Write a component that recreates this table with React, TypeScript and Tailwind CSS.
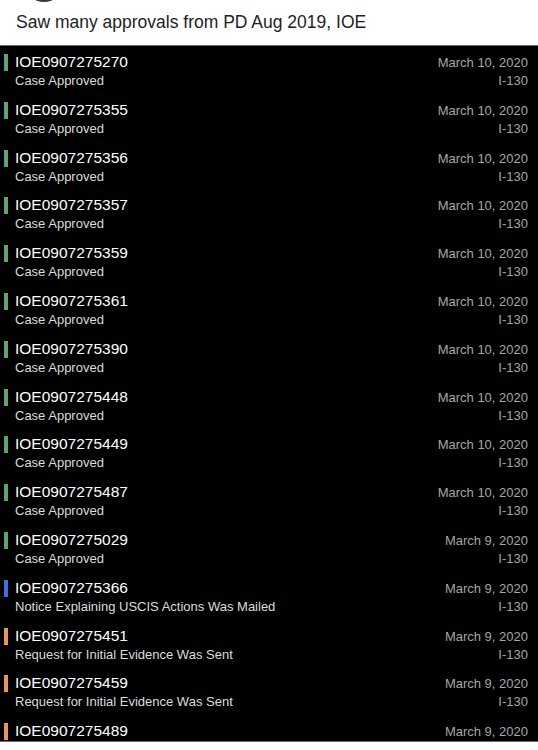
import React from "react";

type Row = { id: string; status?: string; date: string; form?: string; color: "green" | "blue" | "orange" };

const rows: Row[] = [
  { id: "IOE0907275270", status: "Case Approved", date: "March 10, 2020", form: "I-130", color: "green" },
  { id: "IOE0907275355", status: "Case Approved", date: "March 10, 2020", form: "I-130", color: "green" },
  { id: "IOE0907275356", status: "Case Approved", date: "March 10, 2020", form: "I-130", color: "green" },
  { id: "IOE0907275357", status: "Case Approved", date: "March 10, 2020", form: "I-130", color: "green" },
  { id: "IOE0907275359", status: "Case Approved", date: "March 10, 2020", form: "I-130", color: "green" },
  { id: "IOE0907275361", status: "Case Approved", date: "March 10, 2020", form: "I-130", color: "green" },
  { id: "IOE0907275390", status: "Case Approved", date: "March 10, 2020", form: "I-130", color: "green" },
  { id: "IOE0907275448", status: "Case Approved", date: "March 10, 2020", form: "I-130", color: "green" },
  { id: "IOE0907275449", status: "Case Approved", date: "March 10, 2020", form: "I-130", color: "green" },
  { id: "IOE0907275487", status: "Case Approved", date: "March 10, 2020", form: "I-130", color: "green" },
  { id: "IOE0907275029", status: "Case Approved", date: "March 9, 2020", form: "I-130", color: "green" },
  { id: "IOE0907275366", status: "Notice Explaining USCIS Actions Was Mailed", date: "March 9, 2020", form: "I-130", color: "blue" },
  { id: "IOE0907275451", status: "Request for Initial Evidence Was Sent", date: "March 9, 2020", form: "I-130", color: "orange" },
  { id: "IOE0907275459", status: "Request for Initial Evidence Was Sent", date: "March 9, 2020", form: "I-130", color: "orange" },
  { id: "IOE0907275489", date: "March 9, 2020", color: "orange" },
];

function Bar({ color }: { color: Row["color"] }) {
  const cls =
    color === "green" ? "bg-[#5fa274]" : color === "blue" ? "bg-[#3a72dc]" : "bg-[#e8955a]";
  return <div className={`mt-[1px] h-[17px] w-[4px] shrink-0 ${cls}`} />;
}

export default function App() {
  return (
    <div
      className="relative h-[750px] w-[538px] overflow-hidden bg-white"
      style={{ fontFamily: '"Liberation Sans", Arial, sans-serif' }}
    >
      <div className="absolute left-[24px] top-[-38px] h-[40px] w-[40px] rounded-full bg-[#3a3a3a]" />
      <div className="h-[45px] pl-[16px] pt-[11px] text-[17.5px] leading-[22px] text-[#222]">
        Saw many approvals from PD Aug 2019, IOE
      </div>
      <div className="h-[697px] overflow-hidden border-y border-[#6a6a6a] bg-black">
        {rows.map((r) => (
          <div key={r.id} className="flex h-[47.8px] items-start pl-[4px] pr-[10px] pt-[7px]">
            <Bar color={r.color} />
            <div className="ml-[7px] flex min-w-0 flex-1 flex-col">
              <div className="text-[15.5px] leading-[18px] text-white">{r.id}</div>
              {r.status && (
                <div className="text-[13px] leading-[20px] text-[#dcdcdc]">{r.status}</div>
              )}
            </div>
            <div className="flex flex-col items-end pt-[1px]">
              <div className="text-[13px] leading-[18px] text-[#a6a6a6]">{r.date}</div>
              {r.form && <div className="text-[13px] leading-[18px] text-[#a6a6a6]">{r.form}</div>}
            </div>
          </div>
        ))}
      </div>
    </div>
  );
}
